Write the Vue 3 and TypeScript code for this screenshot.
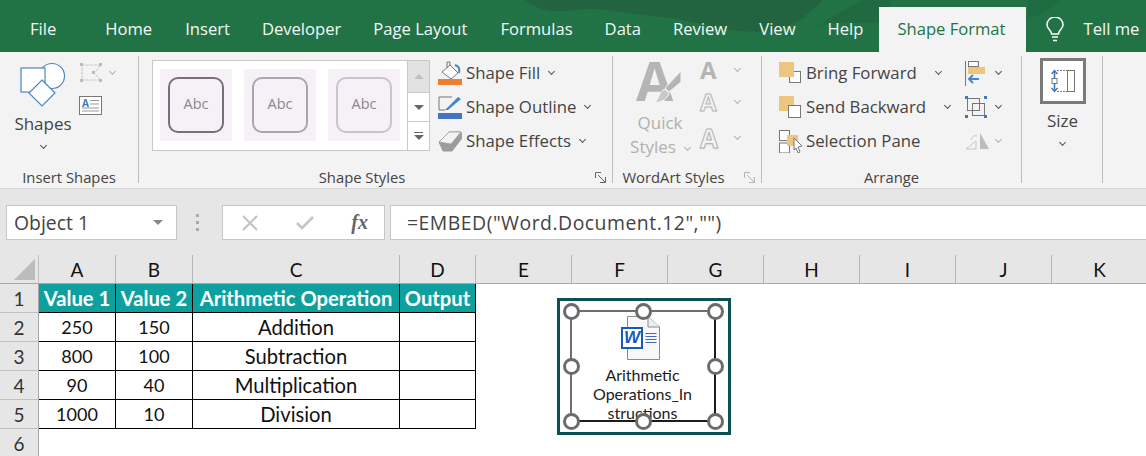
<template>
  <div class="excel">
    <!-- Tab strip -->
    <div class="tabs">
      <svg class="tabs-art" viewBox="0 0 1146 52" width="1146" height="52" aria-hidden="true">
        <path d="M525 0 C535 8 550 14 575 10 C600 6 630 14 650 16 C680 18 700 24 730 30 C760 34 790 30 805 16 C812 10 818 6 822 0 Z" fill="#22643f" />
        <path d="M818 26 C835 14 850 8 862 0 H890 V22 C865 24 840 20 818 26 Z" fill="#216940" />
        <path d="M1028 0 H1060 C1052 10 1040 16 1028 18 Z" fill="#206c42" />
      </svg>
      <span
        v-for="tab in tabs"
        :key="tab.name"
        class="tab"
        :class="{ active: tab.active }"
        :style="{ marginLeft: tab.gap + 'px' }"
      >{{ tab.name }}</span>
      <svg class="bulb" width="18" height="25" viewBox="0 0 18 25" fill="none" stroke="#fff" stroke-width="1.5">
        <path d="M5.500 17 C5.500 13 1 12 1 8 A8 8 0 0 1 17 8 C17 12 12.500 13 12.500 17 Z" />
        <path d="M6 20 H12 M7 23.500 H11" />
      </svg>
      <span class="tell">Tell me</span>
    </div>

    <!-- Ribbon -->
    <div class="ribbon">
      <section class="group g-insert">
        <div class="body insert-body">
          <div class="big">
            <svg width="46" height="45" viewBox="0 0 46 45" fill="none" stroke="#4a86c5" stroke-width="1.2">
              <circle cx="32" cy="14" r="12.500" fill="#fff" />
              <rect x="1" y="6" width="24" height="24" fill="#fff" />
              <path d="M22 18 L35 31 L22 44 L9 31 Z" fill="#fff" />
            </svg>
            <span class="big-text">Shapes</span>
            <i class="chev mt7"></i>
          </div>
          <div class="insert-side">
            <div class="row-inline">
              <svg width="24" height="21" viewBox="0 0 24 21" fill="none" stroke="#c4c4c4">
                <path d="M3 3 H22 L15 11 L22 18 H3 Z" stroke-dasharray="3 1" />
                <g fill="#bbb" stroke="none">
                  <rect x="1" y="1" width="3" height="3" /><rect x="20" y="1" width="3" height="3" />
                  <rect x="13" y="9" width="3" height="3" /><rect x="20" y="17" width="3" height="3" />
                  <rect x="1" y="17" width="3" height="3" />
                </g>
              </svg>
              <i class="chev off ml7"></i>
            </div>
            <svg class="textbox" width="24" height="20" viewBox="0 0 24 20">
              <rect x=".5" y=".5" width="22" height="18" fill="#fff" stroke="#777" />
              <text x="3" y="11" font-size="10" font-weight="700" fill="#3f78b8" font-family="Open Sans">A</text>
              <path d="M11 4.500 H20 M11 8 H20 M3 12 H20 M3 15 H20" stroke="#999" />
            </svg>
          </div>
        </div>
        <div class="label-row"><span class="label">Insert Shapes</span></div>
      </section>

      <section class="group g-styles">
        <div class="body styles-body">
          <div class="gallery">
            <div class="swatches">
              <div v-for="s in swatches" :key="s" class="swatch">
                <div class="swatch-shape" :style="{ borderColor: s }">Abc</div>
              </div>
            </div>
            <div class="gallery-scroll">
              <div class="gs gs-up"><i class="tri up"></i></div>
              <div class="gs"><i class="tri"></i></div>
              <div class="gs gs-more"><b></b><i class="tri"></i></div>
            </div>
          </div>
          <div class="cmd-list">
            <div class="cmd">
              <svg width="24" height="24" viewBox="0 0 24 24" fill="none">
                <path d="M4 11 L12 4 L20 12 L13 18 Z" fill="#fff" stroke="#777" />
                <path d="M12 4 V1 H9 V7" stroke="#777" />
                <path d="M17 4 C21 5 22 8 21 12" stroke="#4a86c5" stroke-width="2" />
                <rect y="18" width="24" height="6" fill="#ed7d31" />
              </svg>
              <span>Shape Fill</span><i class="chev ml5"></i>
            </div>
            <div class="cmd">
              <svg width="24" height="24" viewBox="0 0 24 24" fill="none">
                <path d="M14 2 H1 V15 H7" stroke="#777" />
                <path d="M7 15 L20 2 L23 4 L10 15 Z" fill="#4a86c5" />
                <rect y="18" width="24" height="6" fill="#4472c4" />
              </svg>
              <span>Shape Outline</span><i class="chev ml5"></i>
            </div>
            <div class="cmd">
              <svg width="24" height="24" viewBox="0 0 24 24" stroke-linejoin="round">
                <path d="M1 13 L11 3 H23 L24 9 L14 22 H5 Z" fill="#9c9c9c" stroke="#9c9c9c" />
                <path d="M1 13 L11 3 H23 L13 15 Z" fill="#f2f2f2" stroke="#999" stroke-width=".7" />
              </svg>
              <span>Shape Effects</span><i class="chev ml5"></i>
            </div>
          </div>
        </div>
        <div class="label-row">
          <span class="label grow">Shape Styles</span>
          <svg class="launcher" width="11" height="11" viewBox="0 0 11 11" fill="none" stroke="#666">
            <path d="M.5 6 V.5 H6 M3 3 L10 10 M10.500 5 V10.500 H5" />
          </svg>
        </div>
      </section>

      <section class="group g-wordart">
        <div class="body wordart-body">
          <div class="quick">
            <div class="quick-icon">
              <span class="big-a">A</span>
              <svg width="28" height="34" viewBox="0 0 28 34" class="brush" stroke-linejoin="round">
                <path d="M27 1 V12 L15 22 L11 18 Z" fill="#b5b5b5" stroke="#f3f3f3" />
                <path d="M11 19 L15 23 C14 29 7 32 1 33 C5 29 5 21 11 19 Z" fill="#c9c9c9" stroke="#f3f3f3" />
              </svg>
            </div>
            <span class="off-text">Quick</span>
            <span class="off-text">Styles<i class="chev off ml9"></i></span>
          </div>
          <div class="letters">
            <div class="letter l1"><span class="a-fill">A</span><i class="chev off"></i></div>
            <div class="letter l2"><span class="a-line">A</span><i class="chev off"></i></div>
            <div class="letter l3"><span class="a-line fat">A</span><i class="chev off"></i></div>
          </div>
        </div>
        <div class="label-row">
          <span class="label grow">WordArt Styles</span>
          <svg class="launcher" width="11" height="11" viewBox="0 0 11 11" fill="none" stroke="#b4b4b4">
            <path d="M.5 6 V.5 H6 M3 3 L10 10 M10.500 5 V10.500 H5" />
          </svg>
        </div>
      </section>

      <section class="group g-arrange">
        <div class="body arrange-body">
          <div class="arrange-left">
            <div class="cmd">
              <svg width="22" height="22" viewBox="0 0 22 22">
                <rect x="10.500" y="9.500" width="11" height="11" fill="#fff" stroke="#777" />
                <rect width="15" height="15" fill="#ecc57f" />
              </svg>
              <span>Bring Forward</span><i class="chev ml14"></i>
            </div>
            <div class="cmd">
              <svg width="22" height="22" viewBox="0 0 22 22">
                <rect width="15" height="15" fill="#ecc57f" />
                <rect x="9.500" y="9.500" width="12" height="12" fill="#fff" stroke="#777" />
              </svg>
              <span>Send Backward</span><i class="chev ml14"></i>
            </div>
            <div class="cmd">
              <svg width="24" height="24" viewBox="0 0 24 24" fill="#fff">
                <rect x=".5" y="1.500" width="10" height="10" stroke="#777" />
                <rect x=".5" y="14" width="10" height="10" stroke="#777" />
                <rect x="8" y="6" width="11" height="11" fill="#ecc57f" stroke="none" />
                <path d="M15 9 L23 17 L19 18 L21 23 L19 24 L17 19 L15 21 Z" stroke="#777" />
              </svg>
              <span class="sel">Selection Pane</span>
            </div>
          </div>
          <div class="arrange-right">
            <div class="mini">
              <svg width="20" height="25" viewBox="0 0 20 25" fill="none">
                <path d="M.5 0 V25" stroke="#777" />
                <rect x="3.500" y=".5" width="10" height="5" stroke="#777" fill="#fff" />
                <rect x="3" y="6" width="17" height="7" fill="#ecc57f" />
                <path d="M14 18 H4 M8 14 L4 18 L8 22" stroke="#4a86c5" stroke-width="2" />
              </svg>
              <i class="chev"></i>
            </div>
            <div class="mini">
              <svg width="22" height="22" viewBox="0 0 22 22" fill="none" stroke="#777">
                <rect x="2.500" y="2.500" width="12" height="12" />
                <rect x="7.500" y="7.500" width="12" height="12" />
                <g fill="#3f78b8" stroke="none">
                  <rect width="3" height="3" /><rect x="19" width="3" height="3" />
                  <rect y="19" width="3" height="3" /><rect x="19" y="19" width="3" height="3" />
                </g>
              </svg>
              <i class="chev"></i>
            </div>
            <div class="mini off-mini">
              <svg width="24" height="18" viewBox="0 0 24 18">
                <path d="M1 17 L11 9 V17 Z" fill="none" stroke="#c8c8c8" />
                <path d="M15 1 L24 17 H15 Z" fill="#bdbdbd" />
                <path d="M6 8 C7 4 10 3 12 4" fill="none" stroke="#c8c8c8" />
              </svg>
              <i class="chev off"></i>
            </div>
          </div>
        </div>
        <div class="label-row"><span class="label">Arrange</span></div>
      </section>

      <section class="group g-size">
        <div class="body size-body">
          <div class="size-box">
            <svg width="24" height="24" viewBox="0 0 24 24" fill="none">
              <path d="M3.500 2 V9 M3.500 15 V22" stroke="#3f78b8" stroke-width="1.600" />
              <path d="M.5 5 L3.500 1.500 L6.500 5 M.5 19 L3.500 22.500 L6.500 19" stroke="#3f78b8" stroke-width="1.400" />
              <rect x="1" y="9.500" width="5" height="5" stroke="#777" />
              <path d="M6 1.500 H16 M6 22.500 H16" stroke="#777" stroke-dasharray="2 1" />
              <rect x="16.500" y="1.500" width="7" height="21" stroke="#777" />
            </svg>
          </div>
          <span class="big-text">Size</span>
          <i class="chev mt7"></i>
        </div>
      </section>
    </div>

    <!-- Formula bar -->
    <div class="formula">
      <div class="namebox"><span>Object 1</span><i class="tri name-tri"></i></div>
      <div class="dots"><b></b><b></b><b></b></div>
      <div class="fx-box">
        <svg width="16" height="16" viewBox="0 0 16 16" stroke="#c4c4c4" stroke-width="2.200" fill="none">
          <path d="M1 1 L15 15 M15 1 L1 15" />
        </svg>
        <svg width="18" height="15" viewBox="0 0 18 15" stroke="#c4c4c4" stroke-width="2.600" fill="none">
          <path d="M1 8 L6 13 L17 2" />
        </svg>
        <span class="fx">fx</span>
      </div>
      <div class="formula-input">=EMBED("Word.Document.12","")</div>
    </div>

    <!-- Sheet -->
    <div class="sheet">
      <div class="corner"><i></i></div>
      <div v-for="c in columns" :key="c" class="col-head">{{ c }}</div>

      <template v-for="(row, r) in rows" :key="r">
        <div class="row-head">{{ r + 1 }}</div>
        <div
          v-for="(cell, i) in row"
          :key="i"
          class="cell"
          :class="{ head: r === 0, num: isNumber(cell) }"
        >{{ cell }}</div>
        <div class="rest"></div>
      </template>
      <div class="row-head last">6</div>
      <div class="rest wide"></div>

      <!-- Embedded object sits on top of the cells -->
      <div class="object">
        <div class="frame"></div>
        <div class="obj-content">
          <svg class="doc" width="38" height="44" viewBox="0 0 38 44">
            <path d="M5.500 .5 H26 L37.500 11 V43.500 H5.500 Z" fill="#f8f8f8" stroke="#8a8a8a" />
            <path d="M26 .5 V11 H37.500" fill="#eee" stroke="#8a8a8a" />
            <path d="M23.500 17.500 H34.500 M23.500 20.500 H34.500 M23.500 23.500 H34.500 M23.500 26.500 H34.500" stroke="#3d6cb5" />
          </svg>
          <span class="word-badge">W</span>
          <p>Arithmetic<br />Operations_In<br />structions</p>
        </div>
        <i
          v-for="h in handles"
          :key="h.x + '-' + h.y"
          class="handle"
          :style="{ left: h.x + 'px', top: h.y + 'px' }"
        ></i>
      </div>
    </div>
  </div>
</template>

<script setup lang="ts">
interface Tab {
  name: string
  gap: number
  active?: boolean
}

const tabs: Tab[] = [
  { name: 'File', gap: 14 },
  { name: 'Home', gap: 17 },
  { name: 'Insert', gap: 1 },
  { name: 'Developer', gap: 0 },
  { name: 'Page Layout', gap: 0 },
  { name: 'Formulas', gap: 1 },
  { name: 'Data', gap: 0 },
  { name: 'Review', gap: 0 },
  { name: 'View', gap: 0 },
  { name: 'Help', gap: 0 },
  { name: 'Shape Format', gap: 0, active: true },
]

const swatches = ['#76717a', '#aaa6ad', '#c8c4cb']

const columns = ['A', 'B', 'C', 'D', 'E', 'F', 'G', 'H', 'I', 'J', 'K']

const rows = [
  ['Value 1', 'Value 2', 'Arithmetic Operation', 'Output'],
  ['250', '150', 'Addition', ''],
  ['800', '100', 'Subtraction', ''],
  ['90', '40', 'Multiplication', ''],
  ['1000', '10', 'Division', ''],
]

// handle positions relative to the object's padding box
const handles = [
  { x: 11, y: 10 },
  { x: 83, y: 10 },
  { x: 155, y: 10 },
  { x: 11, y: 65 },
  { x: 155, y: 65 },
  { x: 11, y: 120 },
  { x: 83, y: 120 },
  { x: 155, y: 120 },
]

const isNumber = (value: string) => /^\d+$/.test(value)
</script>

<style>
html,
body {
  margin: 0;
  background: #fff;
  overflow: hidden;
}
</style>

<style scoped>
.excel {
  width: 1146px;
  height: 456px;
  overflow: hidden;
  font-family: "Open Sans", "Noto Sans", sans-serif;
  color: #444;
}

.tabs {
  position: relative;
  display: flex;
  align-items: flex-end;
  height: 52px;
  background: #217346;
  color: #f4f8f5;
  font-size: 16.600px;
}

.tabs-art {
  position: absolute;
  left: 0;
  top: 0;
}

.tab {
  position: relative;
  height: 45px;
  line-height: 44px;
  padding: 0 16px;
  white-space: nowrap;
}

.tab.active {
  background: #f3f3f3;
  color: #217346;
  padding: 0 20px 0 18px;
}

.bulb {
  position: relative;
  margin: 0 0 10px 20px;
  flex: none;
}

.tell {
  position: relative;
  margin-left: 20px;
  height: 45px;
  line-height: 44px;
  white-space: nowrap;
}

.ribbon {
  display: flex;
  height: 137px;
  padding-top: 4px;
  box-sizing: border-box;
  background: #f3f3f3;
  border-bottom: 1px solid #d6d6d6;
  font-size: 16.800px;
}

.group {
  flex: none;
  height: 127px;
  box-sizing: border-box;
  border-right: 1px solid #bcbcbc;
}

.g-insert { width: 139px; }
.g-styles { width: 474px; }
.g-wordart { width: 149px; }
.g-arrange { width: 260px; }
.g-size { width: 81px; }

.body {
  height: 113px;
  box-sizing: border-box;
  display: flex;
}

.label-row {
  display: flex;
  height: 14px;
}

.label {
  flex: 1;
  text-align: center;
  font-size: 14.800px;
  line-height: 17px;
  white-space: nowrap;
}

.label.grow {
  margin-right: 10px;
}

.launcher {
  margin: 3px 6px 0 0;
}

.chev {
  display: inline-block;
  flex: none;
  width: 5px;
  height: 5px;
  box-sizing: border-box;
  border-right: 1px solid #555;
  border-bottom: 1px solid #555;
  transform: rotate(45deg);
  margin-top: -3px;
}

.chev.off {
  border-color: #b0b0b0;
}

.chev.mt7 { margin-top: 7px; }
.chev.ml5 { margin-left: 5px; }
.chev.ml7 { margin-left: 7px; }
.chev.ml9 { margin-left: 9px; vertical-align: 3px; }
.chev.ml14 { margin-left: 14px; }

.tri {
  display: block;
  width: 0;
  height: 0;
  border-left: 5px solid transparent;
  border-right: 5px solid transparent;
  border-top: 5px solid #666;
}

.tri.up {
  border-top: 0;
  border-bottom: 5px solid #c0c0c0;
}

/* Insert Shapes */
.insert-body {
  padding: 6px 0 0 14px;
}

.big {
  display: flex;
  flex-direction: column;
  align-items: center;
  width: 58px;
}

.big-text {
  margin-top: 5px;
  height: 24px;
  line-height: 24px;
  font-size: 17px;
}

.insert-side {
  margin-left: 7px;
}

.row-inline {
  display: flex;
  align-items: center;
  height: 21px;
}

.textbox {
  display: block;
  margin-top: 13px;
}

/* Shape Styles */
.styles-body {
  padding: 4px 0 0 13px;
}

.gallery {
  display: flex;
  width: 278px;
  height: 91px;
  box-sizing: border-box;
  border: 1px solid #c8c8c8;
  background: #fff;
}

.swatches {
  display: flex;
  gap: 12px;
  padding: 8px 0 0 7px;
  width: 254px;
  box-sizing: border-box;
}

.swatch {
  width: 72px;
  height: 72px;
  padding: 8px;
  box-sizing: border-box;
  background: #f5f1f7;
}

.swatch-shape {
  height: 56px;
  box-sizing: border-box;
  border: 2px solid;
  border-radius: 10px;
  text-align: center;
  line-height: 50px;
  font-size: 14.500px;
  color: #8a8a8a;
}

.gallery-scroll {
  flex: 1;
  display: flex;
  flex-direction: column;
  border-left: 1px solid #c8c8c8;
}

.gs {
  flex: 1;
  display: flex;
  flex-direction: column;
  align-items: center;
  justify-content: center;
  border-top: 1px solid #c8c8c8;
}

.gs-up {
  flex: none;
  height: 31px;
  border-top: 0;
  background: #e2e2e2;
}

.gs-more b {
  width: 9px;
  height: 1px;
  margin-bottom: 2px;
  background: #666;
}

.cmd-list {
  margin: -4px 0 0 8px;
}

.cmd {
  display: flex;
  align-items: center;
  gap: 4px;
  height: 34px;
  white-space: nowrap;
}

.cmd span {
  margin-top: -2px;
}

/* WordArt */
.wordart-body {
  padding: 4px 0 0 12px;
}

.quick {
  display: flex;
  flex-direction: column;
  align-items: center;
  width: 70px;
}

.quick-icon {
  position: relative;
  width: 44px;
  height: 48px;
}

.big-a {
  position: absolute;
  left: -2px;
  top: -7px;
  font-size: 54px;
  line-height: 54px;
  font-weight: 700;
  color: #b5b5b5;
}

.brush {
  position: absolute;
  right: 0;
  top: 10px;
}

.off-text {
  height: 24px;
  line-height: 24px;
  font-size: 17px;
  color: #b0b0b0;
  white-space: nowrap;
}

.off-text:first-of-type {
  margin-top: 3px;
}

.letters {
  margin-left: 5px;
}

.letter {
  display: flex;
  align-items: center;
  width: 40px;
  justify-content: space-between;
  height: 32px;
  line-height: 32px;
  font-size: 24px;
  font-weight: 700;
}

.letter.l1 { margin-top: -6px; }
.letter.l3 { margin-top: 4px; }

.a-fill {
  color: #b5b5b5;
}

.a-line {
  color: #f3f3f3;
  -webkit-text-stroke: 1px #b5b5b5;
}

.a-line.fat {
  font-size: 26px;
  text-shadow: 0 1px 1px #ccc;
}

/* Arrange */
.arrange-body {
  padding-left: 17px;
}

.arrange-left {
  width: 186px;
}

.arrange-left .cmd {
  gap: 5px;
}

.sel {
  margin-left: -2px;
}

.mini {
  display: flex;
  align-items: center;
  justify-content: space-between;
  width: 36px;
  height: 34px;
}

.mini svg {
  flex: none;
}

/* Size */
.size-body {
  flex-direction: column;
  align-items: center;
  padding: 2px 0 0 1px;
}

.size-box {
  width: 46px;
  height: 46px;
  box-sizing: border-box;
  border: 3px solid #7a7a7a;
  background: #fff;
  display: flex;
  align-items: center;
  justify-content: center;
}

/* Formula bar */
.formula {
  display: flex;
  align-items: flex-start;
  height: 66px;
  padding: 16px 0 0 6px;
  box-sizing: border-box;
  background: #e6e6e6;
}

.namebox,
.fx-box,
.formula-input {
  height: 35px;
  box-sizing: border-box;
  background: #fff;
  border: 1px solid #c6c6c6;
  display: flex;
  align-items: center;
  color: #444;
}

.namebox {
  width: 171px;
  padding: 0 8px 0 7px;
  justify-content: space-between;
  font-size: 19.400px;
}

.name-tri {
  margin-right: 5px;
  border-top-color: #888;
}

.dots {
  display: flex;
  flex-direction: column;
  gap: 4px;
  margin: 9px 23px 0 19px;
}

.dots b {
  width: 3px;
  height: 3px;
  background: #aaa;
}

.fx-box {
  width: 163px;
  padding: 0 16px 0 19px;
  justify-content: space-between;
}

.fx {
  font-family: "Liberation Serif", serif;
  font-style: italic;
  font-weight: 700;
  font-size: 20px;
  color: #666;
}

.formula-input {
  flex: 1;
  margin-left: 5px;
  padding-left: 16px;
  font-size: 19.400px;
  letter-spacing: 0.5px;
  white-space: nowrap;
  border-right: 0;
}

/* Sheet */
.sheet {
  position: relative;
  display: grid;
  grid-template-columns: 39px 77px 77px 207px 76px repeat(7, 96px);
  grid-template-rows: 29px repeat(5, 29px) 27px;
  font-family: Lato, "Liberation Sans", sans-serif;
  font-size: 20.200px;
  color: #111;
}

.corner,
.col-head {
  box-sizing: border-box;
  background: #e6e6e6;
  border-bottom: 1px solid #a6a6a6;
}

.corner {
  position: relative;
  border-right: 1px solid #c0c0c0;
}

.corner i {
  position: absolute;
  right: 3px;
  bottom: 3px;
  width: 0;
  height: 0;
  border-left: 21px solid transparent;
  border-bottom: 21px solid #bcbcbc;
}

.col-head {
  border-right: 1px solid #b6b6b6;
  text-align: center;
  line-height: 29px;
  font-size: 19px;
}

.row-head {
  box-sizing: border-box;
  background: #e6e6e6;
  border-right: 1px solid #a6a6a6;
  border-bottom: 1px solid #c0c0c0;
  text-align: center;
  line-height: 29px;
  font-size: 19px;
  color: #333;
}

.row-head.last {
  border-bottom: 0;
}

.cell {
  box-sizing: border-box;
  border-right: 1px solid #000;
  border-bottom: 1px solid #000;
  text-align: center;
  line-height: 28px;
  white-space: nowrap;
  overflow: hidden;
}

.cell.num {
  font-size: 18px;
}

.cell.head {
  background: #0ea09f;
  color: #fff;
  font-weight: 700;
}

.rest {
  grid-column: span 7;
}

.rest.wide {
  grid-column: span 11;
}

.object {
  position: absolute;
  left: 557px;
  top: 43px;
  width: 174px;
  height: 137px;
  box-sizing: border-box;
  border: 3px solid #0e4f56;
  background: #fff;
}

.frame {
  position: absolute;
  left: 10px;
  top: 9px;
  width: 146px;
  height: 112px;
  box-sizing: border-box;
  border: 2px solid #1c1c1c;
  border-left-color: #6e6e6e;
  border-top-color: #6e6e6e;
}

.obj-content {
  position: absolute;
  left: 0;
  right: 3px;
  top: 15px;
  display: flex;
  flex-direction: column;
  align-items: center;
}

.doc {
  margin-right: 4px;
}

.word-badge {
  position: absolute;
  left: 61px;
  top: 11px;
  width: 22px;
  height: 22px;
  box-sizing: border-box;
  border: 2px solid #185abd;
  background: #fff;
  color: #185abd;
  font: italic 700 17px/18px "Liberation Sans", sans-serif;
  text-align: center;
}

.obj-content p {
  margin: 5px 0 0;
  text-align: center;
  font-size: 16px;
  line-height: 19px;
  color: #222;
  white-space: nowrap;
}

.handle {
  position: absolute;
  width: 17px;
  height: 17px;
  margin: -8.500px 0 0 -8.500px;
  box-sizing: border-box;
  border: 3px solid #6b6b6b;
  border-radius: 50%;
  background: #fff;
}
</style>
